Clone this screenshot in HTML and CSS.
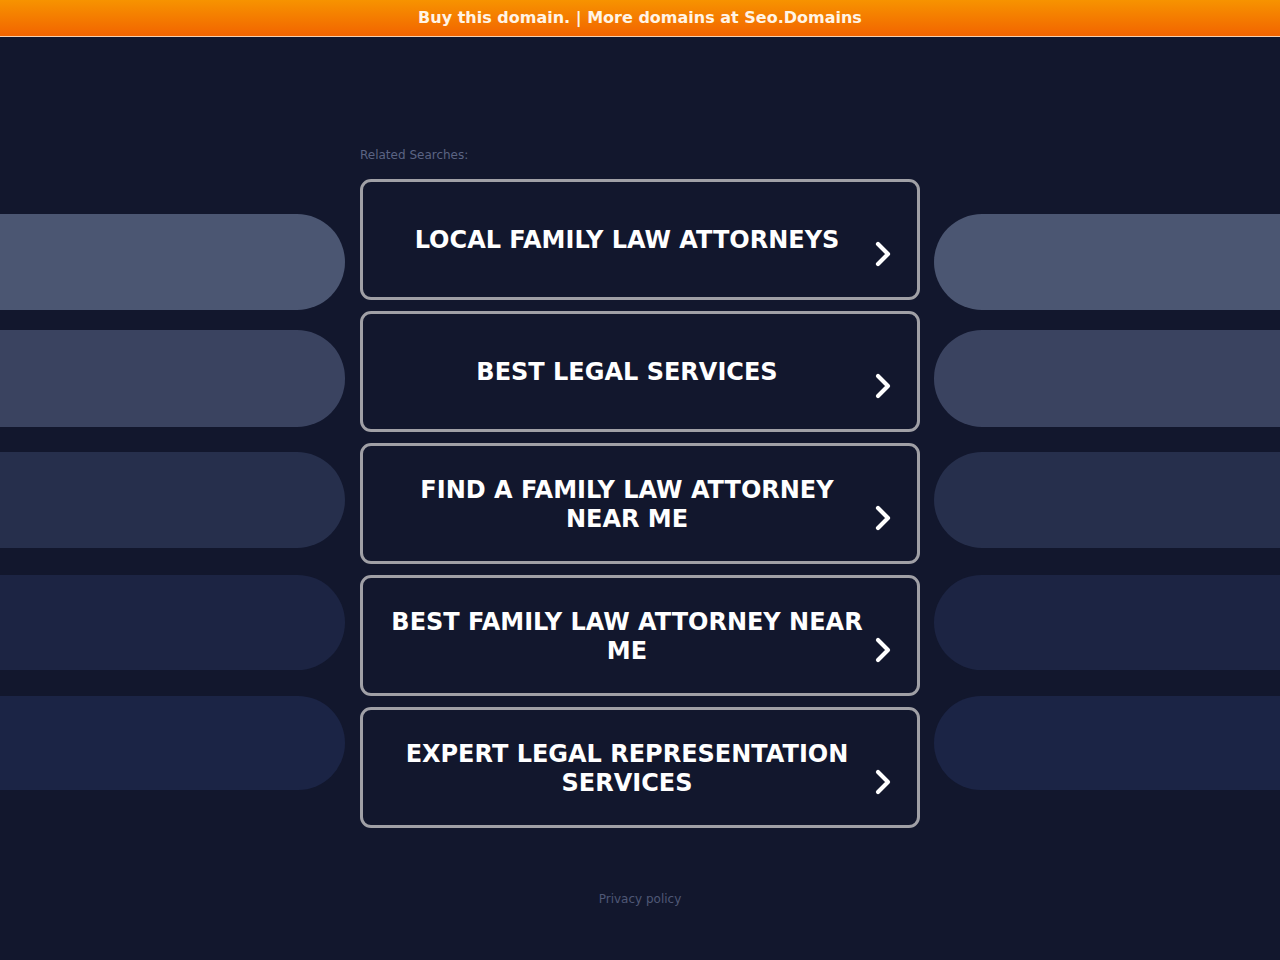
FILE: index.html
```html
<!DOCTYPE html>
<html>
<head>
<meta charset="utf-8">
<link rel="stylesheet" href="styles.css">
</head>
<body>
<div class="topbar">Buy this domain. | More domains at Seo.Domains</div>
<div class="main">
  <div class="side side-left">
    <div class="bar b1"></div>
    <div class="bar b2"></div>
    <div class="bar b3"></div>
    <div class="bar b4"></div>
    <div class="bar b5"></div>
  </div>
  <div class="center">
    <div class="label">Related Searches:</div>
    <div class="list">
      <a class="item"><span class="txt">LOCAL FAMILY LAW ATTORNEYS</span><svg class="chev" viewBox="0 0 20 28"><path d="M5 4 L15 14 L5 24" /></svg></a>
      <a class="item"><span class="txt">BEST LEGAL SERVICES</span><svg class="chev" viewBox="0 0 20 28"><path d="M5 4 L15 14 L5 24" /></svg></a>
      <a class="item"><span class="txt">FIND A FAMILY LAW ATTORNEY NEAR ME</span><svg class="chev" viewBox="0 0 20 28"><path d="M5 4 L15 14 L5 24" /></svg></a>
      <a class="item"><span class="txt">BEST FAMILY LAW ATTORNEY NEAR ME</span><svg class="chev" viewBox="0 0 20 28"><path d="M5 4 L15 14 L5 24" /></svg></a>
      <a class="item"><span class="txt">EXPERT LEGAL REPRESENTATION SERVICES</span><svg class="chev" viewBox="0 0 20 28"><path d="M5 4 L15 14 L5 24" /></svg></a>
    </div>
    <div class="privacy">Privacy policy</div>
  </div>
  <div class="side side-right">
    <div class="bar b1"></div>
    <div class="bar b2"></div>
    <div class="bar b3"></div>
    <div class="bar b4"></div>
    <div class="bar b5"></div>
  </div>
</div>
</body>
</html>
```
FILE: styles.css
```css
* { box-sizing: border-box; }
html, body { margin: 0; padding: 0; }
body {
  background: #12172d;
  font-family: "DejaVu Sans", Verdana, sans-serif;
  width: 1280px;
  height: 960px;
  overflow: hidden;
}
.topbar {
  height: 37px;
  background: linear-gradient(to bottom, #f79300, #f26400);
  border-bottom: 1px solid #f6cfae;
  color: #fff4e6;
  font-weight: bold;
  font-size: 16px;
  text-align: center;
  line-height: 35px;
}
.main {
  display: flex;
}
.side {
  width: 345px;
  display: flex;
  flex-direction: column;
  padding-top: 177px;
}
.side-right { width: 346px; }
.bar {
  height: 96px;
}
.side-left .bar { border-radius: 0 48px 48px 0; }
.side-right .bar { border-radius: 48px 0 0 48px; }
.b1 { background: #4b5672; }
.b2 { background: #3a4360; margin-top: 20px; height: 97px; }
.b3 { background: #262f4c; margin-top: 25px; }
.b4 { background: #1c2443; margin-top: 27px; height: 95px; }
.b5 { background: #1b2445; margin-top: 26px; height: 94px; }
.center {
  width: 560px;
  margin: 0 14px 0 15px;
  padding-top: 111px;
}
.label {
  font-size: 12px;
  color: #5b6483;
  line-height: 14px;
  height: 14px;
}
.list {
  margin-top: 17px;
  display: flex;
  flex-direction: column;
  gap: 11px;
}
.item {
  position: relative;
  display: flex;
  align-items: center;
  justify-content: center;
  height: 121px;
  border: 3px solid #a0a0a6;
  border-radius: 11px;
  padding: 2px 46px 0 20px;
  color: #ffffff;
  text-align: center;
}
.txt {
  font-size: 24px;
  font-weight: bold;
  line-height: 29px;
}
.chev {
  position: absolute;
  right: 24px;
  top: 58px;
  width: 20px;
  height: 28px;
  fill: none;
  stroke: #ffffff;
  stroke-width: 4.2;
  stroke-linecap: round;
  stroke-linejoin: round;
}
.privacy {
  margin-top: 64px;
  text-align: center;
  font-size: 12px;
  color: #4f5876;
  line-height: 14px;
}
```
